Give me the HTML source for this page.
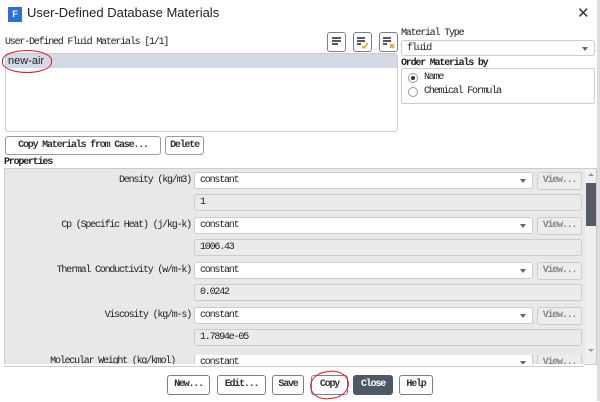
<!DOCTYPE html>
<html><head><style>
*{box-sizing:border-box;margin:0;padding:0}
body{width:600px;height:401px;overflow:hidden;background:#fff;font-family:"Liberation Mono","Noto Sans CJK SC",monospace;font-size:10px;letter-spacing:-1.2px;color:#222;position:relative}
.a{position:absolute;white-space:nowrap}
.btn{position:absolute;white-space:nowrap;border:1px solid #7a818a;border-radius:3px;background:#fff;font-weight:bold;font-size:10px;text-align:center;line-height:18px;color:#333}
.dd{position:absolute;border:1px solid #c8cdd3;border-radius:3px;background:#fff;padding-left:5px;line-height:15px;font-size:10px}
.dd:after{content:"";position:absolute;right:6px;top:6px;border-left:3px solid transparent;border-right:3px solid transparent;border-top:4px solid #666}
.val{position:absolute;border:1px solid #c8cdd3;border-radius:3px;background:#ebebeb;padding-left:5px;line-height:16px}
.view{position:absolute;border:1px solid #c8cdd3;border-radius:3px;background:#ececec;color:#888;font-weight:bold;text-align:center;line-height:16px}
.lbl{position:absolute;right:409px;text-align:right;white-space:nowrap}
</style></head><body>
<div class="a" style="left:8px;top:7px;width:14px;height:15px;background:#2f6fd6;color:#fff;font:bold 9px 'Liberation Sans',sans-serif;letter-spacing:0;text-align:center;line-height:15px">F</div>
<div class="a" style="left:27px;top:5px;font:13px 'Liberation Sans',sans-serif;letter-spacing:0;color:#222">User-Defined Database Materials</div>
<div class="a" style="left:577px;top:4px;font:15px 'Liberation Sans',sans-serif;color:#333">✕</div>
<div class="a" style="left:597px;top:0;width:3px;height:401px;background:#ddd"></div>

<div class="a" style="left:5px;top:37px">User-Defined Fluid Materials [1/1]</div>
<div class="btn" style="left:327px;top:32px;width:19px;height:20px"><svg width="17" height="18"><path d="M4 5h9M4 8h9M4 11h6" stroke="#222" stroke-width="1.4"/></svg></div>
<div class="btn" style="left:353px;top:32px;width:19px;height:20px"><svg width="17" height="18"><path d="M3 5h8M3 8h8M3 11h4" stroke="#222" stroke-width="1.4"/><path d="M8 13l2 2 4-5" stroke="#d99a1c" stroke-width="1.4" fill="none"/></svg></div>
<div class="btn" style="left:379px;top:32px;width:19px;height:20px"><svg width="17" height="18"><path d="M3 5h8M3 8h8M3 11h4" stroke="#222" stroke-width="1.4"/><path d="M10 11l4 4M14 11l-4 4" stroke="#d99a1c" stroke-width="1.4"/></svg></div>

<div class="a" style="left:5px;top:53px;width:393px;height:79px;border:1px solid #c8cdd3;border-radius:3px;background:#fff"></div>
<div class="a" style="left:6px;top:54px;width:391px;height:14px;background:#d3dae3"></div>
<div class="a" style="left:8px;top:55px;font:11px 'Liberation Sans',sans-serif;letter-spacing:0">new-air</div>
<div class="a" style="left:2px;top:50px;width:50px;height:23px;border:1.5px solid #e0141c;border-radius:50%/45%"></div>

<div class="a" style="left:401px;top:28px">Material Type</div>
<div class="dd" style="left:401px;top:40px;width:194px;height:16px">fluid</div>
<div class="a" style="left:401px;top:58px;font-weight:bold">Order Materials by</div>
<div class="a" style="left:401px;top:68px;width:194px;height:36px;border:1px solid #c8cdd3;border-radius:2px"></div>
<div class="a" style="left:408px;top:73px;width:10px;height:10px;border:1px solid #999;border-radius:50%"><div class="a" style="left:2px;top:2px;width:4px;height:4px;background:#333;border-radius:50%"></div></div>
<div class="a" style="left:424px;top:72px">Name</div>
<div class="a" style="left:408px;top:87px;width:10px;height:10px;border:1px solid #999;border-radius:50%"></div>
<div class="a" style="left:424px;top:86px">Chemical Formula</div>

<div class="btn" style="left:5px;top:136px;width:156px;height:19px;border-color:#999">Copy Materials from Case...</div>
<div class="btn" style="left:165px;top:136px;width:39px;height:19px;border-color:#999">Delete</div>
<div class="a" style="left:4px;top:157px;font-weight:bold">Properties</div>

<div class="a" style="left:4px;top:168px;width:593px;height:197px;background:#e8e8e8;border:1px solid #ccc;overflow:hidden">
 <div class="a" style="left:580px;top:0;width:11px;height:197px;background:#f0f0f0"></div>
 <div class="a" style="left:581px;top:14px;width:10px;height:43px;background:#555c67"></div>
 <div class="a" style="left:583px;top:4px;border-left:3px solid transparent;border-right:3px solid transparent;border-bottom:3px solid #999"></div>
 <div class="a" style="left:583px;top:180px;border-left:3px solid transparent;border-right:3px solid transparent;border-top:3px solid #999"></div>
</div>

<div class="lbl" style="top:175px">Density (kg/m3)</div>
<div class="dd" style="left:194px;top:172px;width:339px;height:17px">constant</div>
<div class="view" style="left:537px;top:172px;width:45px;height:18px">View...</div>
<div class="val" style="left:194px;top:194px;width:388px;height:17px">1</div>

<div class="lbl" style="top:220px">Cp (Specific Heat) (j/kg-k)</div>
<div class="dd" style="left:194px;top:217px;width:339px;height:17px">constant</div>
<div class="view" style="left:537px;top:217px;width:45px;height:18px">View...</div>
<div class="val" style="left:194px;top:239px;width:388px;height:17px">1006.43</div>

<div class="lbl" style="top:265px">Thermal Conductivity (w/m-k)</div>
<div class="dd" style="left:194px;top:262px;width:339px;height:17px">constant</div>
<div class="view" style="left:537px;top:262px;width:45px;height:18px">View...</div>
<div class="val" style="left:194px;top:284px;width:388px;height:17px">0.0242</div>

<div class="lbl" style="top:310px">Viscosity (kg/m-s)</div>
<div class="dd" style="left:194px;top:307px;width:339px;height:17px">constant</div>
<div class="view" style="left:537px;top:307px;width:45px;height:18px">View...</div>
<div class="val" style="left:194px;top:329px;width:388px;height:17px">1.7894e-05</div>

<div class="a" style="left:0;top:355px;width:584px;height:9px;overflow:hidden">
 <div class="lbl" style="top:1px">Molecular Weight (kg/kmol)</div>
 <div class="dd" style="left:194px;top:-1px;width:339px;height:17px">constant</div>
 <div class="view" style="left:537px;top:-1px;width:45px;height:18px">View...</div>
</div>
<div class="a" style="left:4px;top:364px;width:580px;height:2px;background:#fff"></div>
<div class="a" style="left:4px;top:366px;width:580px;height:1px;background:#ccc"></div>

<div class="btn" style="left:167px;top:375px;width:43px;height:20px">New...</div>
<div class="btn" style="left:217px;top:375px;width:49px;height:20px">Edit...</div>
<div class="btn" style="left:272px;top:375px;width:32px;height:20px">Save</div>
<div class="btn" style="left:311px;top:375px;width:37px;height:20px">Copy</div>
<div class="btn" style="left:353px;top:375px;width:40px;height:20px;background:#4e5864;color:#fff;border-color:#4e5864">Close</div>
<div class="btn" style="left:399px;top:375px;width:34px;height:20px">Help</div>
<div class="a" style="left:310px;top:371px;width:39px;height:28px;border:1.5px solid #e0141c;border-radius:45%/50%;transform:rotate(-8deg)"></div>
</body></html>
